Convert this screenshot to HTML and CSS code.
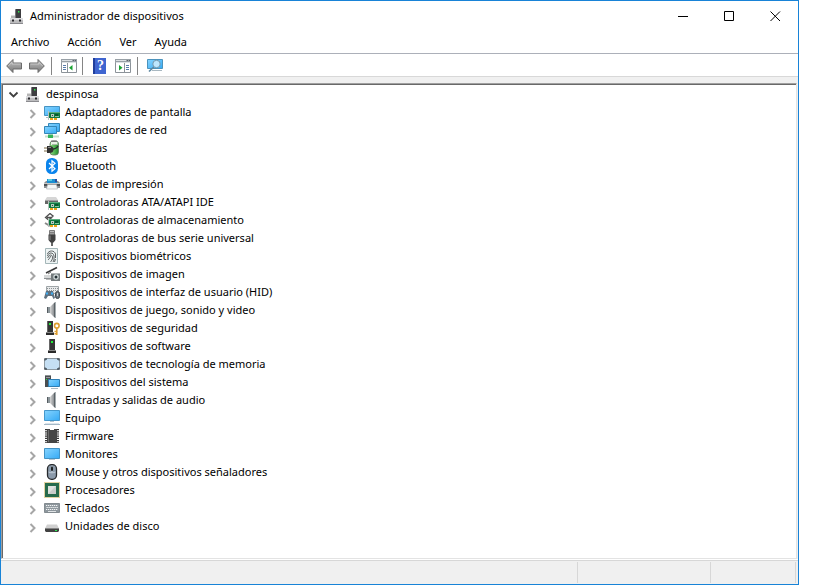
FILE: index.html
```html
<!DOCTYPE html>
<html lang="es">
<head>
<meta charset="utf-8">
<title>Administrador de dispositivos</title>
<link rel="stylesheet" href="styles.css">
</head>
<body>
<svg class="sprite" aria-hidden="true">
  <defs>
    <linearGradient id="blue" x1="0" y1="0" x2="1" y2="1"><stop offset="0" stop-color="#86d4ff"/><stop offset="1" stop-color="#35aaf5"/></linearGradient>
    <linearGradient id="metal" x1="0" y1="0" x2="0" y2="1"><stop offset="0" stop-color="#c4c4c4"/><stop offset="1" stop-color="#777"/></linearGradient>
    <linearGradient id="cone" x1="0" y1="0" x2="1" y2="0"><stop offset="0" stop-color="#d6d6d6"/><stop offset="1" stop-color="#7b8084"/></linearGradient>
    <linearGradient id="can" x1="0" y1="0" x2="1" y2="0"><stop offset="0" stop-color="#8fdf84"/><stop offset="1" stop-color="#1f8c2a"/></linearGradient>
  </defs>
  <symbol id="i-chevron" viewBox="0 0 16 16"><path d="M6.500 6l4 4-4 4" fill="none" stroke="#a6a6a6" stroke-width="2"/></symbol>
  <symbol id="i-open" viewBox="0 0 16 16"><path d="M4.500 6.500l4 4 4-4" fill="none" stroke="#404040" stroke-width="1.800"/></symbol>
  <symbol id="i-computer" viewBox="0 0 16 16">
    <path d="M6 2l1-1h5v9H6z" fill="#3d3d40"/><path d="M6 2l1-1v9H6z" fill="#77777a"/><path d="M9 3h1.400v1.400H9z" fill="#2fe84a"/>
    <path d="M2 7h4v3H2z" fill="#b5b5b5"/><path d="M2 7h4v1H2z" fill="#dcdcdc"/>
    <path d="M1 10h13v6H1z" fill="#bcbcbe"/><path d="M1 10h13v2H1z" fill="#dedee0"/><path d="M1 15h13v1H1z" fill="#8b8b8f"/>
    <path d="M3 11.500h2v2H3zM10 11.500h2v2h-2z" fill="#26262a"/>
  </symbol>
  <symbol id="i-card" viewBox="0 0 12 9">
    <path d="M.5 0v9" stroke="#b7c3bd"/><path d="M1 1h11v6H1z" fill="#117a42"/><path d="M1 1h11v1H1z" fill="#5cae80"/>
    <path d="M3 3h3v3H3z" fill="#b6cdbf"/><path d="M4 4h1v1H4z" fill="#335342"/><path d="M7 3h3v2H7z" fill="#0a5730"/><path d="M7 5h4v1H7z" fill="#7fc79b"/>
    <path d="M2 7h3v2H2zM6 7h3v2H6z" fill="#eaa51a"/>
  </symbol>
  <symbol id="i-display" viewBox="0 0 16 16"><path d="M.5 2.500h15v9H.5z" fill="url(#blue)" stroke="#4693c2"/><path d="M2 13.500h3" stroke="#a9bac4"/><use href="#i-card" x="4" y="7" width="12" height="9"/></symbol>
  <symbol id="i-net" viewBox="0 0 16 16">
    <path d="M4.500 1.500h11v8h-11z" fill="url(#blue)" stroke="#3487b8"/><path d="M.5 4.500h12v7H.5z" fill="url(#blue)" stroke="#3487b8"/>
    <path d="M1 14.500h14" stroke="#c5dccb" stroke-width="2"/><path d="M4 12.500h5V16H4z" fill="#35b45b"/><path d="M5 12h3v1H5z" fill="#9bcfb0"/>
  </symbol>
  <symbol id="i-battery" viewBox="0 0 16 16">
    <rect x="6" y="1" width="8.500" height="14" rx="3" fill="url(#can)" stroke="#5f7a60" stroke-width=".8"/><path d="M7 .5h6v1.500H7z" fill="#777"/><path d="M7 2h6.500v3H7z" fill="#e9f3e6"/><path d="M8 4h5v1H8z" fill="#a8b9a4"/>
    <path d="M8 9c3 0 5-1 6-3" fill="none" stroke="#26302a" stroke-width="1.400"/><path d="M3 6h2c3 0 4.500 1 4.500 3.500S8 13 5 13H3z" fill="#303030"/><path d="M4 7.500h3" stroke="#8b8b8b"/><path d="M0 8h3M0 11h3" stroke="#7a6844" stroke-width="1.200"/>
  </symbol>
  <symbol id="i-bt" viewBox="0 0 16 16"><rect x="2" y="0" width="12" height="16" rx="5.500" fill="#0a84ec"/><path d="M5 5l6 5.700-3 2.500V2.800l3 2.500L5 11" fill="none" stroke="#fff" stroke-width="1.200"/></symbol>
  <symbol id="i-printer" viewBox="0 0 16 16">
    <path d="M2 5h12l2 2v5H0V7z" fill="#8b8f93"/><path d="M0 7h16v1H0z" fill="#c5c8ca"/><path d="M0 8h16v2H0z" fill="#4c4f52"/>
    <path d="M3 3h10v4H3z" fill="#1b8fd2"/><path d="M4 3h4v2H4z" fill="#56cadf"/><path d="M11 3h2v3h-2z" fill="#2b4fa0"/>
    <path d="M3.500 8.500h9l1 4.500h-11z" fill="#f5f7f8" stroke="#a2a6a8" stroke-width=".6"/>
  </symbol>
  <symbol id="i-ide" viewBox="0 0 16 16"><path d="M3 3h9l2 3H1z" fill="#d6d6d6"/><path d="M1 6h13v4H1z" fill="#666"/><path d="M1 6h13v1H1z" fill="#a5a5a5"/><use href="#i-card" x="4" y="7" width="12" height="9"/></symbol>
  <symbol id="i-storage" viewBox="0 0 16 16"><path d="M6 1.500L1.500 5.500l5 4M3 5.500h4.500l2-2M6 1.500l3 2.500M4.500 8L8 5.500" fill="none" stroke="#4f4f4f" stroke-width="1.300"/><path d="M1 11l5 3" stroke="#888" stroke-width="2"/><use href="#i-card" x="4" y="6" width="12" height="9"/></symbol>
  <symbol id="i-usb" viewBox="0 0 16 16"><path d="M5.500.5h5V5h-5z" fill="#bbb" stroke="#7a7a7a"/><path d="M6.500 2h1v1.500h-1zM8.500 2h1v1.500h-1z" fill="#444"/><path d="M4.500 4.500h7V10l-2 2.500h-3l-2-2.500z" fill="#414141"/><path d="M5.500 5.500h1V10h-1z" fill="#8a8a8a"/><path d="M8 12v4" stroke="#333" stroke-width="1.500"/></symbol>
  <symbol id="i-finger" viewBox="0 0 16 16"><path d="M1.500.5h12v15h-12z" fill="#eef4f4" stroke="#a4b6b8"/><g fill="none" stroke="#4c5052" stroke-width=".9"><path d="M3.500 6c1-4 7-4 8 0v4M3.500 8c1-4 6-4 6.500 0v4l-1 2M3.500 10c1-1 1-3 3-3s2 2 2 3-1 3-2 4M4 12c1-1 2-2 2.500-4M11.500 11l-1 3"/></g></symbol>
  <symbol id="i-imaging" viewBox="0 0 16 16"><path d="M2 7L13 1.500" stroke="#3a3a3a" stroke-width="1.600"/><path d="M4 8l3-2" stroke="#777"/><path d="M0 9h8v3H0z" fill="#d6d8d8"/><path d="M0 12h8v1H0z" fill="#8d9193"/><path d="M2 13h5v1H2z" fill="#bbb"/><path d="M7 7h9v8H7z" fill="#757c7e"/><path d="M7 7h9v1H7z" fill="#b0b5b6"/><circle cx="12" cy="11" r="2.700" fill="#d6dfdf"/><circle cx="12" cy="11" r="1.500" fill="#263236"/></symbol>
  <symbol id="i-hid" viewBox="0 0 16 16"><path d="M2.500 2.500h12v7h-12z" fill="#e8eaeb" stroke="#9fa5a8"/><path d="M3 4.500h11M3 6.500h11" stroke="#8a9093" stroke-dasharray="1 1"/><path d="M2 7h7l2 7-1.500 1L8 12H4l-2 3-2-1z" fill="#5f7180"/><path d="M2 8.500h2v2H2zM7 8.500h2v2H7z" fill="#3daef5"/><rect x="11.500" y="7.500" width="4" height="7" rx="2" fill="#68737c" stroke="#3e454a"/><path d="M13 9h1v3h-1z" fill="#c5ccd0"/></symbol>
  <symbol id="i-sound" viewBox="0 0 16 16"><path d="M3 5h3v6H3z" fill="#8d979b"/><path d="M6 5l5-5v16l-5-5z" fill="url(#cone)"/><path d="M3 5h1v6H3z" fill="#555c60"/><path d="M10 1h1v14h-1z" fill="#5c6367"/><path d="M11 0h1v16h-1z" fill="#a5adb0"/></symbol>
  <symbol id="i-security" viewBox="0 0 16 16"><path d="M3 1h6v11H3z" fill="#353535"/><path d="M3 1h1v11H3z" fill="#666"/><path d="M5 3h2v2H5z" fill="#22ed39"/><path d="M2 12h8v3H2z" fill="#2c2c2c"/><path d="M2 12h8v1H2z" fill="#888"/><circle cx="12.800" cy="5.700" r="2.300" fill="none" stroke="#dd9d30" stroke-width="1.600"/><path d="M12.800 8v7M12.500 11.500h-2M12.500 13.800h-2" stroke="#dd9d30" stroke-width="1.600"/></symbol>
  <symbol id="i-software" viewBox="0 0 16 16"><path d="M5 1h6v12H5z" fill="#353535"/><path d="M5 1h1v12H5z" fill="#666"/><path d="M7 3h2v2H7z" fill="#22ed39"/><path d="M4 12h8v3H4z" fill="#292929"/><path d="M4 12h8v1H4z" fill="#888"/></symbol>
  <symbol id="i-memory" viewBox="0 0 16 16"><rect x=".5" y="2.500" width="15" height="11" rx="1.500" fill="#c5dff3" stroke="#8e9aa2"/><path d="M1 4.500V3h2M13 3h2v1.500M15 11.500V13h-2M3 13H1v-1.500" fill="none" stroke="#4a545c" stroke-width="1.500"/></symbol>
  <symbol id="i-system" viewBox="0 0 16 16"><path d="M1 1h6v12H1z" fill="#4a4e51"/><path d="M1 1h6v1H1z" fill="#8d9194"/><path d="M2 3h4v1H2z" fill="#999"/><path d="M2 5h1v1H2z" fill="#20e43c"/><path d="M4.500 5.500h11v7h-11z" fill="url(#blue)" stroke="#2e7eb3"/><path d="M7 14.500h7" stroke="#aab8c2"/></symbol>
  <symbol id="i-pc" viewBox="0 0 16 16"><path d="M.5.5h15v10H.5z" fill="url(#blue)" stroke="#4598cc"/><path d="M6 11h4v1H6z" fill="#b4c6d0"/><path d="M0 14.500h16" stroke="#a4b8c6" /><path d="M1 13.500h14" stroke="#dbe5ec"/></symbol>
  <symbol id="i-firmware" viewBox="0 0 16 16"><path d="M2 1v14M14 1v14" stroke="#333" stroke-width="2" stroke-dasharray="1.200 1"/><path d="M3 1h3v1h4V1h3v14H3z" fill="#454545"/><path d="M4 2h1v12H4z" fill="#6c6c6c"/></symbol>
  <symbol id="i-monitor" viewBox="0 0 16 16"><path d="M.5 2.500h15v10H.5z" fill="url(#blue)" stroke="#4292c4"/><path d="M5 13.500h6" stroke="#b8c7d1"/></symbol>
  <symbol id="i-mouse" viewBox="0 0 16 16"><rect x="3.500" y=".7" width="9" height="14.600" rx="4" fill="#8b9aaa" stroke="#26292c" stroke-width="1.300"/><path d="M8 1.500V8M4.500 8c2 1 5 1 7 0" stroke="#cbd5df" stroke-width=".8" fill="none"/><rect x="7" y="2.500" width="2" height="4.500" rx="1" fill="#1d2022"/></symbol>
  <symbol id="i-cpu" viewBox="0 0 16 16"><path d="M.5.5h15v15H.5z" fill="none" stroke="#c4a746" stroke-dasharray="1 1"/><path d="M1 1h14v14H1z" fill="#276b4c"/><path d="M4 4h8v8H4z" fill="#dfe2df"/><path d="M4 12l8-8v8z" fill="#c9cdca"/></symbol>
  <symbol id="i-keyboard" viewBox="0 0 16 16"><path d="M.5 3.500h15v9H.5z" fill="#8e979d" stroke="#838b90"/><path d="M2 5.500h12M2.500 7.500h12M2 9.500h12" stroke="#f2f4f5" stroke-dasharray="1.300 .7"/><path d="M4 11.500h8" stroke="#dfe3e5"/></symbol>
  <symbol id="i-disk" viewBox="0 0 16 16"><path d="M3 6.500h10l2 4H1z" fill="#d0d0d0"/><path d="M1 10h14v3l-1 1H2l-1-1z" fill="#424242"/><path d="M1 10h14v1H1z" fill="#858585"/><path d="M11 12h2v1h-2z" fill="#2bed52"/></symbol>
  <symbol id="i-arrow" viewBox="0 0 16 16"><path d="M.7 8L7 1.500V5h8.500v6H7v3.500z" fill="url(#metal)" stroke="#6b6b6b"/><path d="M2.300 8L6 4.200V6h8.500" fill="none" stroke="#d2d2d2" stroke-width=".7"/></symbol>
  <symbol id="i-panel-left" viewBox="0 0 16 16"><path d="M.5 1.500h15v13H.5z" fill="#fff" stroke="#8c9399"/><path d="M0 1h16v4H0z" fill="#98a0a6"/><path d="M1 2.500h10M1 4.500h14" stroke="#dce0e3"/><path d="M12 2.500h3" stroke="#59636a" stroke-dasharray="1 1"/><path d="M6.500 5v9" stroke="#8c9399"/><path d="M2 7.500h3M2 9.500h3M2 11.500h3" stroke="#587caa"/><path d="M11.500 7v5.500L8 9.800z" fill="#18a332"/></symbol>
  <symbol id="i-panel-right" viewBox="0 0 16 16"><path d="M.5 1.500h15v13H.5z" fill="#fff" stroke="#8c9399"/><path d="M0 1h16v4H0z" fill="#98a0a6"/><path d="M1 2.500h10M1 4.500h14" stroke="#dce0e3"/><path d="M12 2.500h3" stroke="#59636a" stroke-dasharray="1 1"/><path d="M9.500 5v9" stroke="#8c9399"/><path d="M11 7.500h3M11 9.500h3M11 11.500h3" stroke="#587caa"/><path d="M4 7v5.500l3.500-2.700z" fill="#18a332"/></symbol>
  <symbol id="i-scan" viewBox="0 0 16 16"><path d="M.5 1.500h15v9H.5z" fill="url(#blue)" stroke="#4b93bd"/><path d="M5 12.500h10" stroke="#a9b8c1"/><circle cx="9.500" cy="6" r="3.700" fill="#bde6fd" stroke="#7497ab"/><path d="M6.800 9L2 13.500" stroke="#5d87a0" stroke-width="1.600"/></symbol>
</svg>

<main class="window">
  <header class="titlebar">
    <svg class="icon"><use href="#i-computer"/></svg>
    <h1 class="title">Administrador de dispositivos</h1>
    <div class="controls">
      <button type="button" aria-label="Minimizar"><svg viewBox="0 0 11 11"><path d="M0 5.500h10"/></svg></button>
      <button type="button" aria-label="Maximizar"><svg viewBox="0 0 11 11"><path d="M.5.5h9v9h-9z"/></svg></button>
      <button type="button" aria-label="Cerrar"><svg viewBox="0 0 11 11"><path d="M.5.5l9.500 9.500M10 .5L.5 10"/></svg></button>
    </div>
  </header>
  <nav class="menu">
    <button type="button">Archivo</button>
    <button type="button">Acción</button>
    <button type="button">Ver</button>
    <button type="button">Ayuda</button>
  </nav>
  <div class="toolbar">
    <button type="button" aria-label="Atrás"><svg class="icon"><use href="#i-arrow"/></svg></button>
    <button type="button" aria-label="Adelante"><svg class="icon flip"><use href="#i-arrow"/></svg></button>
    <span class="sep"></span>
    <button type="button" aria-label="Árbol de consola"><svg class="icon"><use href="#i-panel-left"/></svg></button>
    <span class="sep"></span>
    <button type="button" aria-label="Ayuda"><span class="help">?</span></button>
    <button type="button" aria-label="Panel de acciones"><svg class="icon"><use href="#i-panel-right"/></svg></button>
    <span class="sep"></span>
    <button type="button" aria-label="Buscar cambios de hardware"><svg class="icon"><use href="#i-scan"/></svg></button>
  </div>
  <section class="tree">
    <div class="row"><button type="button" aria-label="Contraer"><svg class="icon"><use href="#i-open"/></svg></button><svg class="icon"><use href="#i-computer"/></svg><span>despinosa</span></div>
    <ul class="branch">
      <li class="row"><button type="button" aria-label="Expandir"><svg class="icon"><use href="#i-chevron"/></svg></button><svg class="icon"><use href="#i-display"/></svg><span>Adaptadores de pantalla</span></li>
      <li class="row"><button type="button" aria-label="Expandir"><svg class="icon"><use href="#i-chevron"/></svg></button><svg class="icon"><use href="#i-net"/></svg><span>Adaptadores de red</span></li>
      <li class="row"><button type="button" aria-label="Expandir"><svg class="icon"><use href="#i-chevron"/></svg></button><svg class="icon"><use href="#i-battery"/></svg><span>Baterías</span></li>
      <li class="row"><button type="button" aria-label="Expandir"><svg class="icon"><use href="#i-chevron"/></svg></button><svg class="icon"><use href="#i-bt"/></svg><span>Bluetooth</span></li>
      <li class="row"><button type="button" aria-label="Expandir"><svg class="icon"><use href="#i-chevron"/></svg></button><svg class="icon"><use href="#i-printer"/></svg><span>Colas de impresión</span></li>
      <li class="row"><button type="button" aria-label="Expandir"><svg class="icon"><use href="#i-chevron"/></svg></button><svg class="icon"><use href="#i-ide"/></svg><span>Controladoras ATA/ATAPI IDE</span></li>
      <li class="row"><button type="button" aria-label="Expandir"><svg class="icon"><use href="#i-chevron"/></svg></button><svg class="icon"><use href="#i-storage"/></svg><span>Controladoras de almacenamiento</span></li>
      <li class="row"><button type="button" aria-label="Expandir"><svg class="icon"><use href="#i-chevron"/></svg></button><svg class="icon"><use href="#i-usb"/></svg><span>Controladoras de bus serie universal</span></li>
      <li class="row"><button type="button" aria-label="Expandir"><svg class="icon"><use href="#i-chevron"/></svg></button><svg class="icon"><use href="#i-finger"/></svg><span>Dispositivos biométricos</span></li>
      <li class="row"><button type="button" aria-label="Expandir"><svg class="icon"><use href="#i-chevron"/></svg></button><svg class="icon"><use href="#i-imaging"/></svg><span>Dispositivos de imagen</span></li>
      <li class="row"><button type="button" aria-label="Expandir"><svg class="icon"><use href="#i-chevron"/></svg></button><svg class="icon"><use href="#i-hid"/></svg><span>Dispositivos de interfaz de usuario (HID)</span></li>
      <li class="row"><button type="button" aria-label="Expandir"><svg class="icon"><use href="#i-chevron"/></svg></button><svg class="icon"><use href="#i-sound"/></svg><span>Dispositivos de juego, sonido y video</span></li>
      <li class="row"><button type="button" aria-label="Expandir"><svg class="icon"><use href="#i-chevron"/></svg></button><svg class="icon"><use href="#i-security"/></svg><span>Dispositivos de seguridad</span></li>
      <li class="row"><button type="button" aria-label="Expandir"><svg class="icon"><use href="#i-chevron"/></svg></button><svg class="icon"><use href="#i-software"/></svg><span>Dispositivos de software</span></li>
      <li class="row"><button type="button" aria-label="Expandir"><svg class="icon"><use href="#i-chevron"/></svg></button><svg class="icon"><use href="#i-memory"/></svg><span>Dispositivos de tecnología de memoria</span></li>
      <li class="row"><button type="button" aria-label="Expandir"><svg class="icon"><use href="#i-chevron"/></svg></button><svg class="icon"><use href="#i-system"/></svg><span>Dispositivos del sistema</span></li>
      <li class="row"><button type="button" aria-label="Expandir"><svg class="icon"><use href="#i-chevron"/></svg></button><svg class="icon"><use href="#i-sound"/></svg><span>Entradas y salidas de audio</span></li>
      <li class="row"><button type="button" aria-label="Expandir"><svg class="icon"><use href="#i-chevron"/></svg></button><svg class="icon"><use href="#i-pc"/></svg><span>Equipo</span></li>
      <li class="row"><button type="button" aria-label="Expandir"><svg class="icon"><use href="#i-chevron"/></svg></button><svg class="icon"><use href="#i-firmware"/></svg><span>Firmware</span></li>
      <li class="row"><button type="button" aria-label="Expandir"><svg class="icon"><use href="#i-chevron"/></svg></button><svg class="icon"><use href="#i-monitor"/></svg><span>Monitores</span></li>
      <li class="row"><button type="button" aria-label="Expandir"><svg class="icon"><use href="#i-chevron"/></svg></button><svg class="icon"><use href="#i-mouse"/></svg><span>Mouse y otros dispositivos señaladores</span></li>
      <li class="row"><button type="button" aria-label="Expandir"><svg class="icon"><use href="#i-chevron"/></svg></button><svg class="icon"><use href="#i-cpu"/></svg><span>Procesadores</span></li>
      <li class="row"><button type="button" aria-label="Expandir"><svg class="icon"><use href="#i-chevron"/></svg></button><svg class="icon"><use href="#i-keyboard"/></svg><span>Teclados</span></li>
      <li class="row"><button type="button" aria-label="Expandir"><svg class="icon"><use href="#i-chevron"/></svg></button><svg class="icon"><use href="#i-disk"/></svg><span>Unidades de disco</span></li>
    </ul>
  </section>
  <footer class="status"><span class="pane grow"></span><span class="pane wide"></span><span class="pane"></span></footer>
</main>
</body>
</html>
```
FILE: styles.css
```css
* { box-sizing: border-box; }
body {
  margin: 0;
  padding-right: 20px;
  background: #fff;
  color: #000;
  font: 11px/18px "Noto Sans", "Open Sans", sans-serif;
}
button {
  display: flex;
  align-items: center;
  justify-content: center;
  padding: 0;
  border: 0;
  background: none;
  color: inherit;
  font: inherit;
}
.sprite { position: absolute; width: 0; height: 0; }
.icon { display: block; flex: none; width: 16px; height: 16px; }
.flip { transform: scaleX(-1); }

.window {
  display: flex;
  flex-direction: column;
  min-height: 100vh;
  border: 1px solid #1883d7;
  background: #f0f0f0;
}
.titlebar, .menu, .toolbar { background: #fff; }
.titlebar { display: flex; align-items: center; height: 30px; padding-left: 8px; }
.title { margin: 0 0 0 5px; font-size: 11px; font-weight: 400; }
.controls { display: flex; align-self: stretch; margin-left: auto; }
.controls button { width: 46px; }
.controls svg { width: 11px; height: 11px; fill: none; stroke: #000; }

.menu { display: flex; gap: 18px; height: 22px; padding-left: 10px; }

.toolbar {
  display: flex;
  align-items: center;
  height: 24px;
  padding: 1px 0 0 1px;
  border-top: 1px solid #acb0b9;
  border-bottom: 1px solid #d8d8d8;
}
.toolbar button { width: 23px; height: 22px; }
.sep { width: 1px; height: 18px; margin: 0 5px 0 3px; background: #858585; }
.sep + button + .sep { margin-left: 2px; }
.help {
  width: 13px;
  height: 16px;
  border-left: 2px solid #203f9c;
  background: #3f65d0;
  color: #fff;
  font: 700 14px/16px "Liberation Serif", serif;
  text-align: center;
}

.tree {
  flex: 1;
  margin-top: 6px;
  padding: 1px 0 0 1px;
  border: 1px solid #e3e3e3;
  border-top-color: #a0a0a0;
  border-left-color: #a0a0a0;
  background: #fff;
  box-shadow: inset 1px 1px 0 #696969;
  margin-right: 1px;
}
.branch { margin: 0; padding: 0 0 0 19px; list-style: none; }
.row { display: flex; align-items: center; height: 18px; padding-left: 2px; white-space: nowrap; }
.row button { margin-right: 4px; }
.row span { margin-left: 5px; }

.status {
  display: flex;
  height: 24px;
  padding: 1px 2px 1px 0;
  border-top: 1px solid #d7d7d7;
  box-shadow: 0 -1px 0 #fff;
  margin-top: 1px;
}
.pane { width: 85px; border-right: 1px solid #d7d7d7; }
.wide { width: 133px; }
.grow { flex: 1; }
```
